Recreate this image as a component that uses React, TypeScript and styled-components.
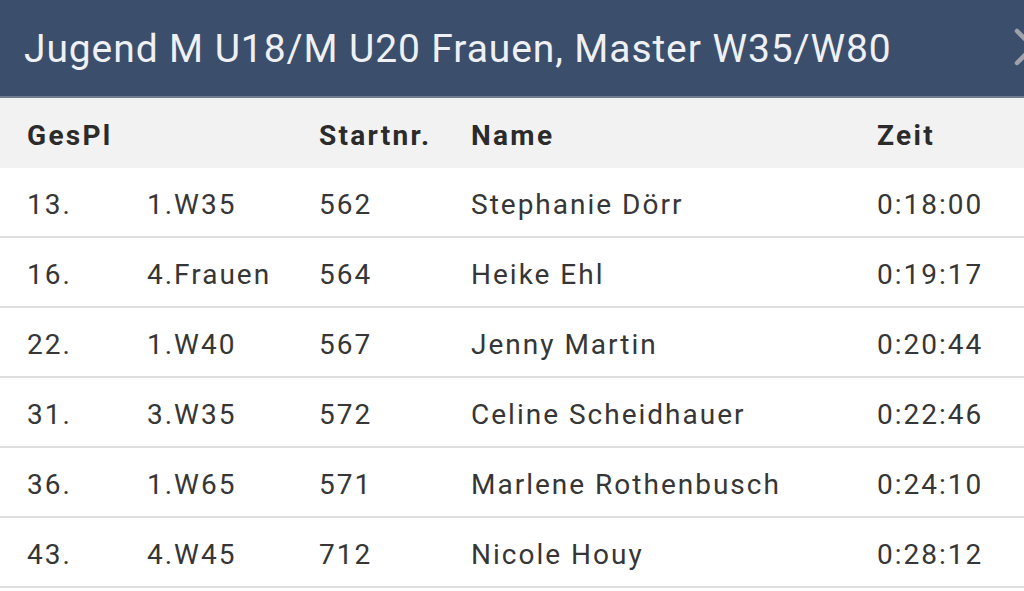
import * as React from "react"
import styled, { createGlobalStyle } from "styled-components"

const GlobalStyle = createGlobalStyle`
    html, body {
        margin: 0;
        padding: 0;
        background: #ffffff;
        overflow: hidden;
    }
    body {
        font-family: Roboto, "Liberation Sans", sans-serif;
    }
`

interface ResultRow {
    gesPl: string;
    klasse: string;
    startnr: string;
    name: string;
    zeit: string;
}

const rows: ResultRow[] = [
    { gesPl: "13.", klasse: "1.W35", startnr: "562", name: "Stephanie Dörr", zeit: "0:18:00" },
    { gesPl: "16.", klasse: "4.Frauen", startnr: "564", name: "Heike Ehl", zeit: "0:19:17" },
    { gesPl: "22.", klasse: "1.W40", startnr: "567", name: "Jenny Martin", zeit: "0:20:44" },
    { gesPl: "31.", klasse: "3.W35", startnr: "572", name: "Celine Scheidhauer", zeit: "0:22:46" },
    { gesPl: "36.", klasse: "1.W65", startnr: "571", name: "Marlene Rothenbusch", zeit: "0:24:10" },
    { gesPl: "43.", klasse: "4.W45", startnr: "712", name: "Nicole Houy", zeit: "0:28:12" },
]

const Page = styled.div`
    width: 1024px;
    height: 591px;
    overflow: hidden;
    display: flex;
    flex-direction: column;
`

const TitleBar = styled.div`
    height: 96px;
    flex-shrink: 0;
    background: #3b4e6c;
    border-bottom: 2px solid #6f7c8f;
    display: flex;
    align-items: center;
    padding-left: 24px;
    position: relative;
    overflow: hidden;
`

const Title = styled.h1`
    margin: 0;
    padding-top: 1px;
    font-size: 39px;
    font-weight: 400;
    letter-spacing: 0.9px;
    color: #eef0f3;
    white-space: nowrap;
`

// close button sits half outside the dialog edge
const CloseIcon = styled.svg`
    position: absolute;
    right: -28px;
    top: 28px;
    width: 38px;
    height: 38px;
`

const Grid = styled.div<{ $head?: boolean }>`
    display: grid;
    grid-template-columns: 120px 172px 152px 406px 1fr;
    align-items: center;
    box-sizing: border-box;
    height: 70px;
    flex-shrink: 0;
    padding: 4px 0 0 27px;
    background: ${p => (p.$head ? "#f2f2f2" : "#ffffff")};
    border-bottom: ${p => (p.$head ? "none" : "2px solid #dedede")};
    font-size: 28px;
    letter-spacing: ${p => (p.$head ? "2.3px" : "2px")};
    color: ${p => (p.$head ? "#2b2b2b" : "#363636")};
    font-weight: ${p => (p.$head ? 700 : 400)};
`

const Cell = styled.div`
    white-space: nowrap;
`

export default function App() {
    return (
        <>
            <GlobalStyle />
            <Page>
                <TitleBar>
                    <Title>Jugend M U18/M U20 Frauen, Master W35/W80</Title>
                    <CloseIcon viewBox="0 0 38 38">
                        <path d="M3 3 L35 35 M35 3 L3 35" stroke="#9ea2aa" strokeWidth="4.5" strokeLinecap="round" />
                    </CloseIcon>
                </TitleBar>
                <Grid $head>
                    <Cell>GesPl</Cell>
                    <Cell></Cell>
                    <Cell>Startnr.</Cell>
                    <Cell>Name</Cell>
                    <Cell>Zeit</Cell>
                </Grid>
                {rows.map(r => (
                    <Grid key={r.startnr}>
                        <Cell>{r.gesPl}</Cell>
                        <Cell>{r.klasse}</Cell>
                        <Cell>{r.startnr}</Cell>
                        <Cell>{r.name}</Cell>
                        <Cell>{r.zeit}</Cell>
                    </Grid>
                ))}
            </Page>
        </>
    )
}
